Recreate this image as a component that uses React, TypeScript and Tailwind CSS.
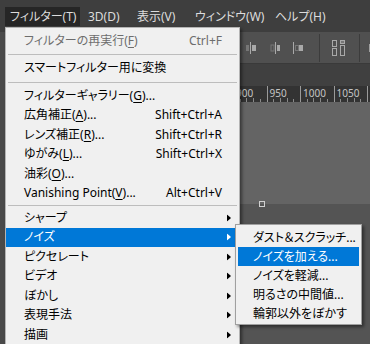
import React from "react";

const FONT =
  "font-['Noto_Sans','Noto_Sans_CJK_JP',sans-serif] [font-feature-settings:'palt']";

function U({ children }: { children: React.ReactNode }) {
  return <span className="underline underline-offset-[2px]">{children}</span>;
}

function Arrow({ white }: { white?: boolean }) {
  return (
    <svg
      width="4"
      height="7"
      viewBox="0 0 4 7"
      className="absolute right-[7px] top-1/2 -translate-y-1/2"
    >
      <polygon points="0,0 4,3.5 0,7" fill={white ? "#ffffff" : "#000000"} />
    </svg>
  );
}

function MenuRow({
  label,
  shortcut,
  arrow,
  active,
  disabled,
}: {
  label: React.ReactNode;
  shortcut?: string;
  arrow?: boolean;
  active?: boolean;
  disabled?: boolean;
}) {
  const base = "relative mr-[1px] flex h-[19.5px] items-center pl-[18px] pr-[16px]";
  const color = active
    ? "bg-[#0078d7] text-white"
    : disabled
    ? "text-[#6d6d6d]"
    : "text-black";
  return (
    <div className={`${base} ${color}`}>
      <span className="flex-1 whitespace-nowrap">{label}</span>
      {shortcut && <span className="whitespace-nowrap">{shortcut}</span>}
      {arrow && <Arrow white={active} />}
    </div>
  );
}

function SubRow({ label, active }: { label: string; active?: boolean }) {
  return (
    <div
      className={`mx-[2px] flex h-[19px] items-center pl-[15px] whitespace-nowrap ${
        active ? "bg-[#0078d7] text-white" : "text-black"
      }`}
    >
      {label}
    </div>
  );
}

function AlignIcon({ variant }: { variant: number }) {
  const c = "#a9a9a9";
  const d = "#767676";
  if (variant === 0) {
    return (
      <svg width="12" height="14" viewBox="0 0 12 14">
        <rect x="0" y="4" width="3" height="6" fill={d} />
        <rect x="4" y="1" width="1" height="12" fill={c} />
        <rect x="6" y="4" width="4" height="6" fill={c} />
      </svg>
    );
  }
  if (variant === 1) {
    return (
      <svg width="12" height="14" viewBox="0 0 12 14">
        <rect x="1" y="4" width="3" height="6" fill="none" stroke={d} />
        <rect x="5" y="1" width="1" height="12" fill={c} />
        <rect x="7" y="4" width="3" height="6" fill={c} />
      </svg>
    );
  }
  if (variant === 2) {
    return (
      <svg width="13" height="14" viewBox="0 0 13 14">
        <rect x="0" y="1" width="1" height="12" fill={c} />
        <rect x="2.5" y="4.5" width="3" height="5" fill="none" stroke={d} />
        <rect x="6" y="4" width="4" height="6" fill={c} />
      </svg>
    );
  }
  return (
    <svg width="14" height="16" viewBox="0 0 14 16">
      <rect x="0.5" y="0.5" width="4" height="6" fill="none" stroke={c} />
      <rect x="0.5" y="8.5" width="4" height="7" fill="none" stroke={c} />
      <rect x="8.5" y="0.5" width="4" height="3" fill={d} stroke={c} />
      <rect x="8.5" y="5.5" width="4" height="10" fill="none" stroke={c} />
    </svg>
  );
}

function RulerTicks() {
  const ticks: React.ReactNode[] = [];
  const start = 27;
  for (let i = 0; i < 60; i++) {
    const x = start + i * 6.7;
    const major = i % 5 === 0;
    const h = major ? 16 : i % 5 === 2 || i % 5 === 3 ? 4 : 3;
    ticks.push(
      <line
        key={i}
        x1={Math.round(x) + 0.5}
        x2={Math.round(x) + 0.5}
        y1={16 - h}
        y2={16}
        stroke={major ? "#9a9a9a" : "#8a8a8a"}
        strokeWidth="1"
      />
    );
  }
  return (
    <svg width="365" height="16" className="absolute left-0 top-0">
      {ticks}
    </svg>
  );
}

export default function App() {
  const labels = [900, 950, 1000, 1050];
  return (
    <div className={`relative h-[344px] w-[370px] overflow-hidden bg-[#4b4b4b] text-[12px] ${FONT}`}>
      {/* menu bar */}
      <div className="flex h-[32px] bg-[#3e3e3e] pt-[7px] text-[#dcdcdc]">
        <div className="ml-[5px] flex h-[19px] w-[75px] items-center bg-[#262626] pl-[5px]">
          フィルター(T)
        </div>
        <div className="flex h-[19px] w-[52px] items-center pl-[8px]">3D(D)</div>
        <div className="flex h-[19px] w-[58px] items-center pl-[5px]">表示(V)</div>
        <div className="flex h-[19px] w-[80px] items-center pl-[5px]">ウィンドウ(W)</div>
        <div className="flex h-[19px] items-center pl-[5px]">ヘルプ(H)</div>
      </div>

      {/* body */}
      <div className="flex h-[312px]">
        <div className="w-[5px] bg-[#4a4a4a]" />
        <div className="flex flex-1 flex-col">
          {/* options bar */}
          <div className="flex h-[32px] items-center justify-end border-b border-[#3a3a3a] bg-[#505050]">
            <div className="mr-[12px]">
              <AlignIcon variant={0} />
            </div>
            <div className="mr-[11px]">
              <AlignIcon variant={1} />
            </div>
            <div className="mr-[13px]">
              <AlignIcon variant={2} />
            </div>
            <div className="mr-[12px] h-[28px] w-px bg-[#3c3c3c]" />
            <div className="mr-[13px]">
              <AlignIcon variant={3} />
            </div>
            <div className="mr-[9px] h-[28px] w-px bg-[#3c3c3c]" />
            <div className="mr-[-2px] h-[8px] w-[3px] bg-[#a0a0a0]" />
          </div>
          {/* tab bar */}
          <div className="h-[22px] bg-[#404040]" />
          {/* ruler */}
          <div className="relative flex h-[16px] bg-[#333333] pl-[228px] text-[10px] leading-[12px] text-[#c4c4c4]">
            <RulerTicks />
            {labels.map((n) => (
              <div key={n} className="relative w-[33.5px] shrink-0 pl-[3px] pt-[1px]">
                {n}
              </div>
            ))}
          </div>
          {/* pasteboard */}
          <div className="relative h-[102px] bg-[#646464]">
            <div className="absolute left-[254px] top-[99px] h-[6px] w-[6px] border border-[#d0d0d0]" />
          </div>
          <div className="flex-1 bg-[#545454]" />
        </div>
      </div>

      {/* filter menu */}
      <div className="absolute left-[5px] top-[27px] h-[330px] w-[235px] border border-[#b4b4b4] bg-[#f0f0f0] pt-[3px] shadow-[2px_2px_3px_rgba(0,0,0,0.45)]">
        <MenuRow
          label={
            <>
              フィルターの再実行(<U>F</U>)
            </>
          }
          shortcut="Ctrl+F"
          disabled
        />
        <div className="flex h-[8px] items-center">
          <div className="mx-[2px] h-px flex-1 bg-[#bdbdbd]" />
        </div>
        <MenuRow label="スマートフィルター用に変換" />
        <div className="flex h-[8px] items-center">
          <div className="mx-[2px] h-px flex-1 bg-[#bdbdbd]" />
        </div>
        <MenuRow
          label={
            <>
              フィルターギャラリー(<U>G</U>)...
            </>
          }
        />
        <MenuRow
          label={
            <>
              広角補正(<U>A</U>)...
            </>
          }
          shortcut="Shift+Ctrl+A"
        />
        <MenuRow
          label={
            <>
              レンズ補正(<U>R</U>)...
            </>
          }
          shortcut="Shift+Ctrl+R"
        />
        <MenuRow
          label={
            <>
              ゆがみ(<U>L</U>)...
            </>
          }
          shortcut="Shift+Ctrl+X"
        />
        <MenuRow
          label={
            <>
              油彩(<U>O</U>)...
            </>
          }
        />
        <MenuRow
          label={
            <>
              Vanishing Point(<U>V</U>)...
            </>
          }
          shortcut="Alt+Ctrl+V"
        />
        <div className="flex h-[5px] items-center">
          <div className="mx-[2px] h-px flex-1 bg-[#bdbdbd]" />
        </div>
        <MenuRow label="シャープ" arrow />
        <MenuRow label="ノイズ" arrow active />
        <MenuRow label="ピクセレート" arrow />
        <MenuRow label="ビデオ" arrow />
        <MenuRow label="ぼかし" arrow />
        <MenuRow label="表現手法" arrow />
        <MenuRow label="描画" arrow />
      </div>

      {/* noise submenu */}
      <div className="absolute left-[235px] top-[224px] w-[127px] border border-[#a0a0a0] bg-[#f0f0f0] pb-[1px] pt-[3px] shadow-[2px_2px_3px_rgba(0,0,0,0.45)]">
        <SubRow label="ダスト＆スクラッチ..." />
        <SubRow label="ノイズを加える..." active />
        <SubRow label="ノイズを軽減..." />
        <SubRow label="明るさの中間値..." />
        <SubRow label="輪郭以外をぼかす" />
      </div>
    </div>
  );
}
